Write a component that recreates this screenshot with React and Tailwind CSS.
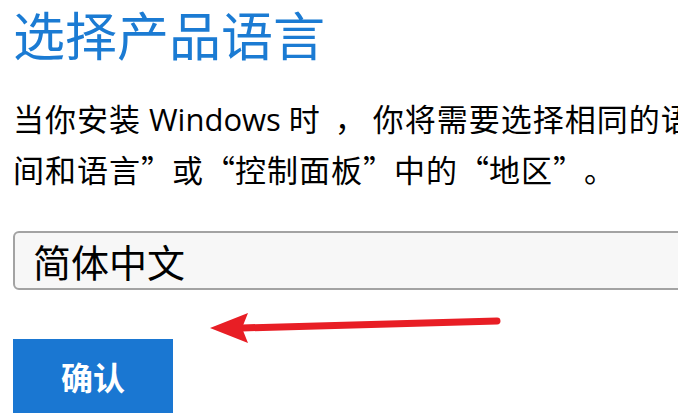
function Q({ children, side }) {
  // full-width quote mark, like the CJK typesetting in the screenshot
  return (
    <span className={side === 'open' ? 'inline-block w-[1em] text-right' : 'inline-block w-[1em] text-left'}>
      {children}
    </span>
  );
}

export default function App() {
  return (
    <div className="relative w-[678px] h-[415px] overflow-hidden bg-white font-['Noto_Sans_CJK_SC',sans-serif] text-black [text-spacing-trim:space-all]">
      <div className="pl-[13px] pt-[2px]">
        <h1 className="text-[52px] leading-[64px] font-normal text-[#1b7bd3] whitespace-nowrap">选择产品语言</h1>

        <div className="mt-[27px] text-[31px] leading-[49px] tracking-[1px] whitespace-nowrap">
          <p>
            当你安装 <span className="font-['Open_Sans',sans-serif] tracking-normal">Windows</span> 时
            <span className="inline-block w-[52px] pl-[14px]">，</span>你将需要选择相同的语言，或者稍后在
            <Q side="open">“</Q>设置<Q>”</Q>中的<Q side="open">“</Q>时
          </p>
          <p>
            间和语言<Q>”</Q>或<Q side="open">“</Q>控制面板<Q>”</Q>中的<Q side="open">“</Q>地区<Q>”</Q>。
          </p>
        </div>

        <div className="mt-[38px] w-[720px] h-[59px] rounded-[6px] border-2 border-[#a3a3a3] bg-[#f7f7f7] flex items-center pl-[18px]">
          <span className="text-[38px] leading-none">简体中文</span>
        </div>

        <button className="mt-[49px] w-[160px] h-[74px] bg-[#1a77d2] text-white text-[32px] font-bold flex items-center justify-center">
          确认
        </button>
      </div>

      {/* annotation arrow */}
      <svg className="absolute left-[200px] top-[305px]" width="310" height="45" viewBox="0 0 310 45">
        <line x1="42" y1="23" x2="297" y2="16" stroke="#e81e25" strokeWidth="7" strokeLinecap="round" />
        <polygon points="10,23 48,8 42,23 48,38" fill="#e81e25" />
      </svg>
    </div>
  );
}
